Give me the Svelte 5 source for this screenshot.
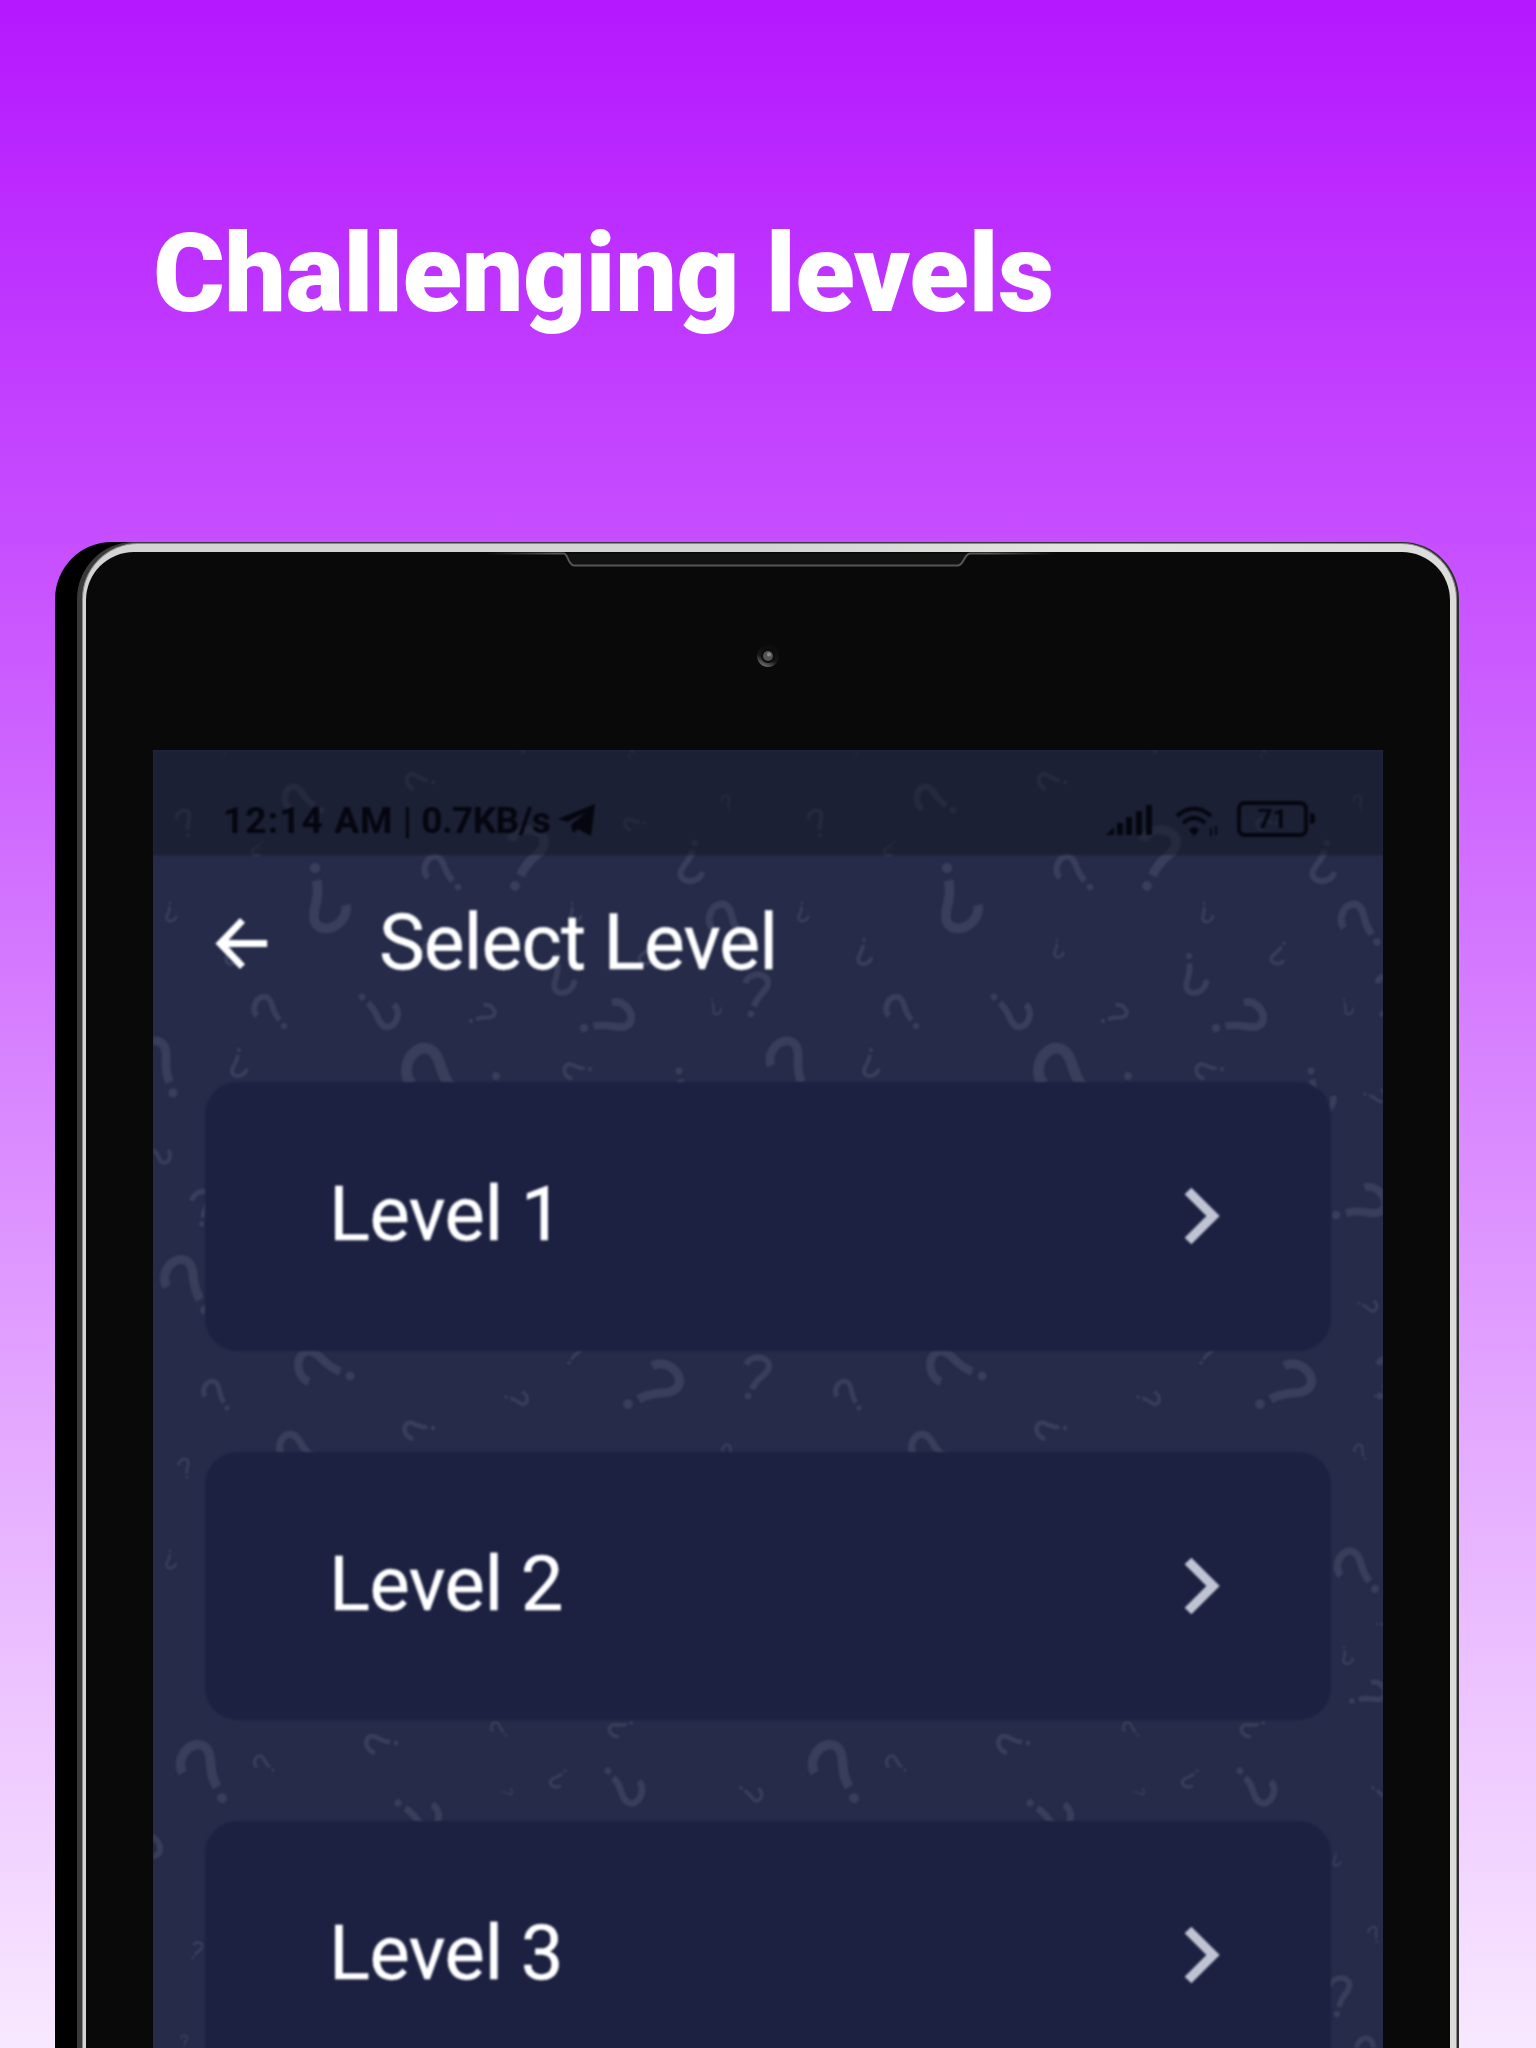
<script>
  const levels = ['Level 1', 'Level 2', 'Level 3'];

  // Each mark: dot x, dot y, crown x, crown y, in the wallpaper's own space.
  const tiled = [
    [162, 118, 173, 182], [305, 137, 276, 106], [362, 136, 388, 80], [542, 93, 531, 132],
    [17, 153, 16, 172], [592, 192, 563, 153], [131, 276, 106, 246], [209, 247, 241, 277],
    [318, 271, 343, 261], [431, 278, 481, 267], [559, 250, 564, 265], [598, 264, 612, 224],
    [310, 352, 262, 297], [86, 300, 82, 327], [437, 319, 410, 318], [526, 321, 535, 365],
    [343, 326, 320, 370], [20, 343, -1, 288], [168, 60, 133, 38], [280, 32, 253, 27],
    [35, 85, 32, 59], [109, 92, 99, 104], [491, 73, 471, 72], [576, 60, 573, 45],
    [404, 206, 408, 245], [499, 193, 487, 213], [272, 190, 272, 208], [419, 153, 421, 173],
    [79, 190, 76, 215], [72, 4, 66, -12], [370, 2, 352, -14], [476, 6, 488, -12],
    [197, 626, 145, 605], [74, 658, 56, 630], [353, 647, 375, 652], [475, 654, 529, 626],
    [595, 646, 614, 608], [280, 678, 250, 677], [167, 713, 129, 685], [416, 613, 428, 593],
    [34, 727, 32, 708], [580, 709, 573, 694],
    [69, 1048, 40, 992], [120, 1020, 103, 1006], [243, 993, 212, 990], [353, 985, 340, 972],
    [478, 973, 455, 980], [349, 1042, 360, 1043], [412, 1021, 397, 1035], [455, 1021, 484, 1054],
    [588, 1038, 608, 1050], [245, 1053, 284, 1078]
  ];
  const edges = [
    [-3, 396, 15, 413], [49, 474, 53, 440], [52, 560, 23, 507], [17, 801, 16, 819],
    [-30, 1102, 9, 1100], [40, 1208, 49, 1193], [31, 1297, 33, 1285],
    [1212, 344, 1233, 350], [1183, 465, 1235, 452], [1206, 553, 1224, 560],
    [1222, 646, 1240, 645], [1222, 839, 1191, 800], [1224, 874, 1240, 874],
    [1191, 897, 1194, 915], [1199, 951, 1234, 942], [1183, 1102, 1182, 1116],
    [1184, 1264, 1193, 1227], [1224, 1192, 1220, 1176], [1230, 1316, 1209, 1287]
  ];
  const marks = [...tiled, ...tiled.map(([a, b, c, d]) => [a + 632, b, c + 632, d]), ...edges];

  function place([dx, dy, tx, ty]) {
    const turn = (Math.atan2(tx - dx, dy - ty) * 180) / Math.PI;
    const scale = Math.hypot(tx - dx, ty - dy) / 100;
    return `translate(${dx} ${dy}) rotate(${turn.toFixed(1)}) scale(${scale.toFixed(3)})`;
  }
</script>

<main class="page">
  <h1>Challenging levels</h1>

  <div class="device">
    <div class="rim">
      <div class="face">
        <svg class="speaker" width="1364" height="24" viewBox="0 0 1364 24">
          <defs>
            <linearGradient id="lip">
              <stop offset="0" stop-color="#555" stop-opacity="0" />
              <stop offset=".12" stop-color="#555" />
              <stop offset=".88" stop-color="#555" />
              <stop offset="1" stop-color="#555" stop-opacity="0" />
            </linearGradient>
          </defs>
          <path d="M400 1.5H478C482 2 482 13 488 13.5H872C878 13 878 2 884 1.5H970" fill="#111212" stroke="url(#lip)" stroke-width="2" />
        </svg>
        <svg class="camera" width="24" height="24" viewBox="0 0 24 24">
          <defs>
            <linearGradient id="lens" x1=".25" y1="1" x2=".6" y2=".2">
              <stop offset="0" stop-color="#777" />
              <stop offset=".5" stop-color="#181818" />
              <stop offset="1" stop-color="#0d0d0d" />
            </linearGradient>
          </defs>
          <circle cx="12" cy="12" r="11" fill="url(#lens)" />
          <circle cx="12" cy="12" r="7" fill="#0c0c0c" />
          <circle cx="12" cy="12" r="5" fill="#555" />
          <circle cx="13" cy="10.5" r="2" fill="#8a8a8a" />
        </svg>

        <div class="screen">
          <svg class="wallpaper" width="1230" height="1298" viewBox="0 0 1230 1298">
            {#each marks as mark}
              <g transform={place(mark)}>
                <path d="M-37 -64C-38 -82 -20 -96 -3 -95C14 -93 17 -80 13 -67C8 -52 0 -42 1 -19" />
                <circle r="8" />
              </g>
            {/each}
          </svg>

          <div class="content">
            <div class="status">
              <span class="clock"><span class="time">12:14 AM</span> | <span class="rate">0.7KB/s</span></span>
              <svg class="plane" width="38" height="32" viewBox="0 0 38 32"><path d="M0 15L37 0L33 32L20 25L15 29L13 21L28 8L9 18Z" /></svg>
              <svg class="signal" width="47" height="32" viewBox="0 0 47 32">
                <path d="M0 31L8 23V31ZM11 19H17V31H11ZM20 13H26V31H20ZM30 7H36V31H30ZM40 1H46V31H40Z" />
              </svg>
              <svg class="wifi" width="44" height="32" viewBox="0 0 44 32">
                <path class="arc" d="M2 12Q19 -3 36 12M8 19Q19 9 30 19" />
                <path d="M14 26Q19 20 24 26L19 32ZM35 24H37V32H35ZM40 22H42V31H40Z" />
              </svg>
              <div class="battery">71</div>
            </div>

            <header>
              <svg class="back" width="77" height="77" viewBox="0 0 24 24"><path d="M20 12H5.8M12.3 4.8L5.4 12L12.3 19.2" /></svg>
              <h2>Select Level</h2>
            </header>

            <ul>
              {#each levels as level}
                <li>
                  <span>{level}</span>
                  <svg width="36" height="58" viewBox="0 0 36 58"><path d="M4 4L29 29L4 54" /></svg>
                </li>
              {/each}
            </ul>
          </div>
        </div>
      </div>
    </div>
  </div>
</main>

<style>
  :global(body) {
    margin: 0;
  }
  .page {
    width: 1536px;
    height: 2048px;
    overflow: hidden;
    isolation: isolate;
    background: linear-gradient(#b517ff, #f8e8ff);
    font-family: Roboto, 'Liberation Sans', sans-serif;
  }
  h1 {
    margin: 0;
    height: 542px;
    box-sizing: border-box;
    padding: 204px 0 0 153px;
    font-size: 109.5px;
    font-weight: 900;
    line-height: 140px;
    letter-spacing: -0.5px;
    color: #fff;
    white-space: nowrap;
  }
  .device {
    position: relative;
    margin-left: 77px;
    width: 1382px;
    height: 1506px;
    box-sizing: border-box;
    padding: 1px 2px 0 5px;
    border-radius: 57px 57px 0 0;
    background: linear-gradient(90deg, #3a3a3a 60%, #2c2e2c);
  }
  .device::before {
    content: '';
    position: absolute;
    z-index: -1;
    left: -22px;
    top: 0;
    width: 140px;
    height: 100%;
    border-radius: 57px 0 0 0;
    background: #000;
  }
  .rim {
    height: 100%;
    box-sizing: border-box;
    padding: 8px 6px 0 3px;
    border: 1px solid #8b8b8b;
    border-bottom: 0;
    border-radius: 56px 56px 0 0;
    background: linear-gradient(90deg, #d4d4d4 50%, #e4e4e2 75%, #dcdcda);
  }
  .face {
    height: 100%;
    box-sizing: border-box;
    border-radius: 48px 48px 0 0;
    background: #090909;
    overflow: hidden;
    display: flex;
    flex-direction: column;
  }
  .speaker {
    display: block;
    flex: none;
  }
  .camera {
    flex: none;
    margin: 68px 0 82px 670px;
  }
  .screen {
    display: grid;
    flex: none;
    margin-left: 67px;
    width: 1230px;
    height: 1298px;
    overflow: hidden;
    background: #252b49;
  }
  .wallpaper {
    grid-area: 1 / 1;
    fill: #393e5b;
    filter: blur(1.2px);
  }
  .wallpaper path {
    fill: none;
    stroke: #393e5b;
    stroke-width: 15;
  }
  .content {
    grid-area: 1 / 1;
    filter: blur(0.8px);
    z-index: 1;
  }
  .status {
    height: 105px;
    box-sizing: border-box;
    padding: 50px 75px 0 70px;
    display: flex;
    align-items: flex-start;
    background: rgba(20, 22, 34, 0.5);
    color: #05060f;
    fill: #05060f;
  }
  .clock {
    width: 327px;
    font-size: 37px;
    font-weight: 700;
    line-height: 42px;
    white-space: nowrap;
  }
  .time {
    letter-spacing: 1.1px;
  }
  .rate {
    letter-spacing: -0.6px;
  }
  .plane {
    margin: 4px 0 0 8px;
  }
  .signal {
    margin: 4px 0 0 auto;
  }
  .wifi {
    margin: 4px 18px 0 22px;
  }
  .arc {
    fill: none;
    stroke: #05060f;
    stroke-width: 4;
  }
  .battery {
    position: relative;
    width: 71px;
    height: 36px;
    margin-top: 1px;
    box-sizing: border-box;
    border: 4px solid #05060f;
    border-radius: 8px;
    text-align: center;
    font-size: 26px;
    font-weight: 700;
    line-height: 29px;
  }
  .battery::after {
    content: '';
    position: absolute;
    right: -11px;
    top: 8px;
    width: 5px;
    height: 11px;
    border-radius: 0 4px 4px 0;
    background: #05060f;
  }
  header {
    height: 227px;
    box-sizing: border-box;
    padding: 50px 0 0 50px;
    display: flex;
    align-items: flex-start;
  }
  .back {
    fill: none;
    stroke: #fff;
    stroke-width: 2.2;
  }
  h2 {
    margin: -7px 0 0 99px;
    font-size: 77px;
    font-weight: 400;
    line-height: 90px;
    letter-spacing: -0.9px;
    color: #fff;
    white-space: nowrap;
    -webkit-text-stroke: 0.4px #fff;
  }
  ul {
    margin: 0;
    padding: 0 52px;
    list-style: none;
    display: grid;
    gap: 101px;
  }
  li {
    height: 268.5px;
    box-sizing: border-box;
    padding: 0 111px 0 124px;
    display: flex;
    align-items: center;
    justify-content: space-between;
    border-radius: 33px;
    background: #1c2142;
  }
  li span {
    font-size: 76px;
    line-height: 90px;
    letter-spacing: -0.5px;
    color: #fff;
    padding-bottom: 4px;
    -webkit-text-stroke: 0.4px #fff;
  }
  li svg {
    fill: none;
    stroke: #c0c4d2;
    stroke-width: 9.5;
  }
</style>
